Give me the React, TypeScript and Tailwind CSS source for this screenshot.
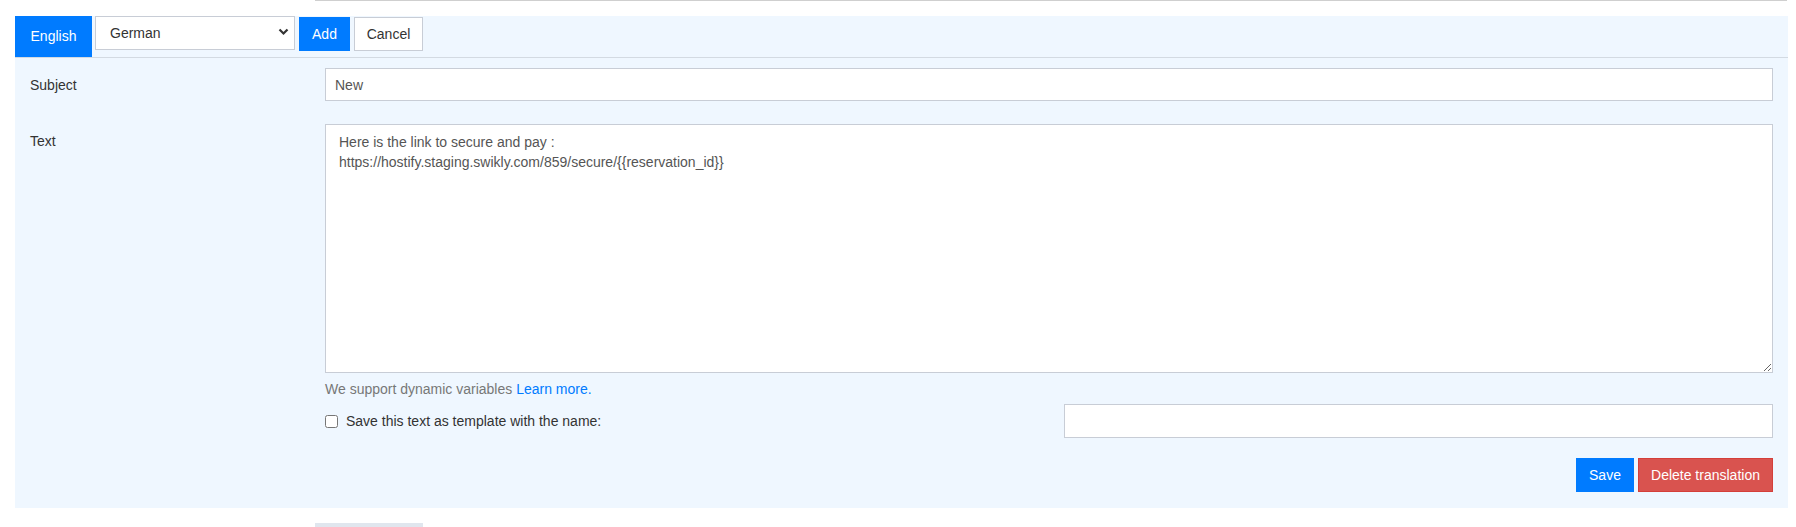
const font = { fontFamily: '"Liberation Sans", Arial, sans-serif' };

const App = () => {
  return (
    <div className="min-h-screen bg-white text-[14px] text-[#333]" style={font}>
      {/* line left over from the block above */}
      <div className="ml-[315px] mr-[9px] border-t border-[#cfcfcf]" />

      <div className="mx-[15px] mt-[15px] w-[1773px] bg-[#eff7ff] pb-[16px]">
        {/* language tabs */}
        <div className="flex h-[42px] items-start border-b border-[#d3dae2]">
          <div className="flex h-[41px] w-[77px] items-center justify-center bg-[#007bff] text-white">English</div>
          <div className="relative ml-[3px] h-[34px] w-[200px]">
            <select
              defaultValue="German"
              className="h-full w-full appearance-none border border-[#c8cdd6] bg-white pl-[14px] text-[14px] text-[#333] outline-none"
              style={font}
            >
              <option>German</option>
              <option>French</option>
              <option>Spanish</option>
            </select>
            <svg
              className="pointer-events-none absolute right-[6px] top-[12px]"
              width="11"
              height="8"
              viewBox="0 0 11 8"
            >
              <path d="M1.5 1.5 L5.5 5.5 L9.5 1.5" fill="none" stroke="#333" strokeWidth="2.2" />
            </svg>
          </div>
          <button className="ml-[4px] mt-px h-[34px] w-[51px] bg-[#007bff] text-white">Add</button>
          <button className="ml-[4px] mt-px h-[34px] w-[69px] border border-[#c8cdd6] bg-white text-[#333]">
            Cancel
          </button>
        </div>

        <div className="px-[15px]">
          {/* subject */}
          <div className="mt-[10px] flex items-center">
            <div className="w-[295px] pt-px">Subject</div>
            <input
              defaultValue="New"
              className="h-[33px] flex-1 border border-[#c8cdd6] bg-white px-[9px] text-[14px] text-[#555] outline-none"
              style={font}
            />
          </div>

          {/* text */}
          <div className="mt-[23px] flex items-start">
            <div className="w-[295px] pt-[7px]">Text</div>
            <div className="flex-1">
              <textarea
                defaultValue={
                  'Here is the link to secure and pay :\nhttps://hostify.staging.swikly.com/859/secure/{{reservation_id}}'
                }
                className="block h-[249px] w-full border border-[#c8cdd6] bg-white px-[13px] py-[7px] text-[14px] leading-[20px] text-[#555] outline-none"
                style={font}
              />
              <p className="mt-[6px] leading-[20px] text-[#777]">
                We support dynamic variables <a className="text-[#007bff]">Learn more.</a>
              </p>

              <div className="mt-[5px] grid grid-cols-2 gap-[30px]">
                <label className="flex items-center gap-[8px] text-[#333]">
                  <input type="checkbox" className="m-0 h-[13px] w-[13px]" />
                  Save this text as template with the name:
                </label>
                <input className="h-[34px] border border-[#c8cdd6] bg-white px-[9px] outline-none" />
              </div>
            </div>
          </div>

          {/* actions */}
          <div className="mt-[20px] flex justify-end gap-[4px]">
            <button className="h-[34px] w-[58px] bg-[#007bff] text-white">Save</button>
            <button className="h-[34px] w-[135px] border border-[#d43f3a] bg-[#d9534f] text-white">
              Delete translation
            </button>
          </div>
        </div>
      </div>

      <div className="ml-[315px] mt-[15px] h-[10px] w-[108px] bg-[#e0e6ee]" />
    </div>
  );
};

export default App;
